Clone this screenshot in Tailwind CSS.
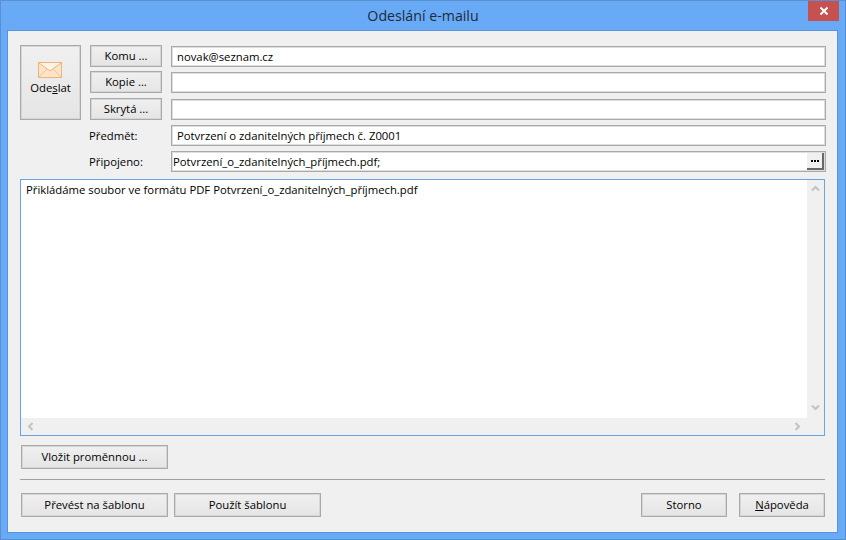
<!DOCTYPE html>
<html lang="cs">
<head>
    <meta charset="UTF-8">
    <title>Odeslání e-mailu</title>
    <script src="https://cdn.jsdelivr.net/npm/@tailwindcss/browser@4"></script>
</head>
<body class="w-[846px] h-[540px] overflow-hidden bg-[#69aaf7] text-[11.3px] text-black font-['Open_Sans','Noto_Sans',sans-serif]">
    <div class="w-[846px] h-[540px] border border-[#5a8fd0] flex flex-col">
        <!-- title bar -->
        <div class="relative h-[29px] shrink-0 flex items-center justify-center text-[14.2px] text-[#1c2a3a]">
            <span class="pt-[1px]">Odeslání e-mailu</span>
            <button class="absolute right-[6px] top-0 w-[31px] h-[20px] bg-[#c75050] flex items-center justify-center">
                <svg width="10" height="10" viewBox="0 0 10 10"><path d="M1.5 1.5l7 7M8.5 1.500l-7 7" stroke="#fff" stroke-width="2" fill="none"/></svg>
            </button>
        </div>
        <!-- client -->
        <div class="w-[831px] h-[503px] ml-[6px] border border-[#5a93dc] bg-[#f0f0f0] pt-[14px] pl-[12px] flex flex-col">
            <div class="flex w-[806px]">
                <button class="w-[61px] h-[75px] shrink-0 border border-[#a9a9a9] shadow-[inset_0_0_0_1px_#d6d6d6] bg-gradient-to-b from-[#f0f0f0] to-[#e5e5e5] flex flex-col items-center pt-[16px]">
                    <svg class="mr-[1px]" width="24" height="16" viewBox="0 0 24 16">
                        <rect x="0.5" y="0.5" width="23" height="15" fill="#fde3c8" stroke="#f0b27a"/>
                        <path d="M1 1l11 8 11-8" fill="#fff3e4" stroke="#f0b27a"/>
                        <path d="M1 15l8-8M23 15l-8-8" stroke="#f5c596" fill="none"/>
                    </svg>
                    <span class="mt-[2px]">Ode<u>s</u>lat</span>
                </button>
                <div class="flex flex-col flex-1 ml-[9px]">
                    <div class="flex items-end h-[22px]">
                        <button class="w-[72px] h-[22px] border border-[#a9a9a9] shadow-[inset_0_0_0_1px_#d6d6d6] bg-gradient-to-b from-[#f0f0f0] to-[#e5e5e5] leading-[16px]">Komu ...</button>
                        <div class="ml-[9px] flex-1 h-[21px] border border-[#a9a9a9] shadow-[inset_0_0_0_1px_#dedede] bg-white pl-[5px] leading-[19px]">novak@seznam.cz</div>
                    </div>
                    <div class="flex items-end h-[22px] mt-[4px]">
                        <button class="w-[72px] h-[22px] border border-[#a9a9a9] shadow-[inset_0_0_0_1px_#d6d6d6] bg-gradient-to-b from-[#f0f0f0] to-[#e5e5e5] leading-[16px]">Kopie ...</button>
                        <div class="ml-[9px] flex-1 h-[21px] border border-[#a9a9a9] shadow-[inset_0_0_0_1px_#dedede] bg-white"></div>
                    </div>
                    <div class="flex items-end h-[22px] mt-[5px]">
                        <button class="w-[72px] h-[22px] border border-[#a9a9a9] shadow-[inset_0_0_0_1px_#d6d6d6] bg-gradient-to-b from-[#f0f0f0] to-[#e5e5e5] leading-[16px]">Skrytá ...</button>
                        <div class="ml-[9px] flex-1 h-[21px] border border-[#a9a9a9] shadow-[inset_0_0_0_1px_#dedede] bg-white"></div>
                    </div>
                </div>
            </div>
            <div class="flex items-center h-[21px] mt-[5px] w-[806px]">
                <span class="ml-[69px] w-[82px] pt-[2px]">Předmět:</span>
                <div class="flex-1 h-[21px] border border-[#a9a9a9] shadow-[inset_0_0_0_1px_#dedede] bg-white pl-[5px] leading-[19px]">Potvrzení o zdanitelných příjmech č. Z0001</div>
            </div>
            <div class="flex items-center h-[21px] mt-[5px] w-[806px]">
                <span class="ml-[69px] w-[82px] pt-[2px]">Připojeno:</span>
                <div class="flex-1 h-[21px] border border-[#a9a9a9] shadow-[inset_0_0_0_1px_#dedede] bg-white pl-[1px] pr-[1px] leading-[19px] flex justify-between items-center">
                    <span>Potvrzení_o_zdanitelných_příjmech.pdf;</span>
                    <button class="w-[17px] h-[17px] bg-[#f0f0f0] border-r-2 border-b-2 border-[#696969] flex items-center justify-center gap-[1px]">
                        <span class="w-[2px] h-[2px] bg-black"></span>
                        <span class="w-[2px] h-[2px] bg-black"></span>
                        <span class="w-[2px] h-[2px] bg-black"></span>
                    </button>
                </div>
            </div>
            <!-- message body -->
            <div class="relative mt-[7px] w-[805px] h-[257px] border border-[#6aa5e3] bg-white pl-[5px] pt-[1px] leading-[17px]">
                Přikládáme soubor ve formátu PDF Potvrzení_o_zdanitelných_příjmech.pdf
                <div class="absolute right-0 top-0 bottom-0 w-[17px] bg-[#f0f0f0] flex flex-col justify-between items-center py-[5px]">
                    <svg width="9" height="7" viewBox="0 0 9 7"><path d="M1 5.5l3.5-3.5 3.5 3.5" stroke="#c2c2c2" stroke-width="2" fill="none"/></svg>
                    <svg class="mb-[19px]" width="9" height="7" viewBox="0 0 9 7"><path d="M1 1.5l3.5 3.5 3.5-3.5" stroke="#c2c2c2" stroke-width="2" fill="none"/></svg>
                </div>
                <div class="absolute left-0 right-0 bottom-0 h-[17px] bg-[#f0f0f0] flex justify-between items-center pl-[6px] pr-[23px]">
                    <svg width="7" height="9" viewBox="0 0 7 9"><path d="M5.5 1l-3.500 3.500 3.500 3.500" stroke="#c2c2c2" stroke-width="2" fill="none"/></svg>
                    <svg width="7" height="9" viewBox="0 0 7 9"><path d="M1.500 1l3.500 3.500-3.500 3.500" stroke="#c2c2c2" stroke-width="2" fill="none"/></svg>
                </div>
            </div>
            <button class="mt-[9px] ml-[1px] w-[147px] h-[24px] shrink-0 border border-[#a9a9a9] shadow-[inset_0_0_0_1px_#d6d6d6] bg-gradient-to-b from-[#f0f0f0] to-[#e5e5e5]">Vložit proměnnou ...</button>
            <div class="mt-[10px] w-[805px] h-[1px] bg-[#a0a0a0]"></div>
            <div class="flex mt-[13px] ml-[1px] w-[804px]">
                <button class="w-[147px] h-[24px] border border-[#a9a9a9] shadow-[inset_0_0_0_1px_#d6d6d6] bg-gradient-to-b from-[#f0f0f0] to-[#e5e5e5]">Převést na šablonu</button>
                <button class="ml-[6px] w-[147px] h-[24px] border border-[#a9a9a9] shadow-[inset_0_0_0_1px_#d6d6d6] bg-gradient-to-b from-[#f0f0f0] to-[#e5e5e5]">Použít šablonu</button>
                <button class="ml-auto w-[86px] h-[24px] border border-[#a9a9a9] shadow-[inset_0_0_0_1px_#d6d6d6] bg-gradient-to-b from-[#f0f0f0] to-[#e5e5e5]">Storno</button>
                <button class="ml-[12px] w-[86px] h-[24px] border border-[#a9a9a9] shadow-[inset_0_0_0_1px_#d6d6d6] bg-gradient-to-b from-[#f0f0f0] to-[#e5e5e5]"><u>N</u>ápověda</button>
            </div>
        </div>
    </div>
</body>
</html>
